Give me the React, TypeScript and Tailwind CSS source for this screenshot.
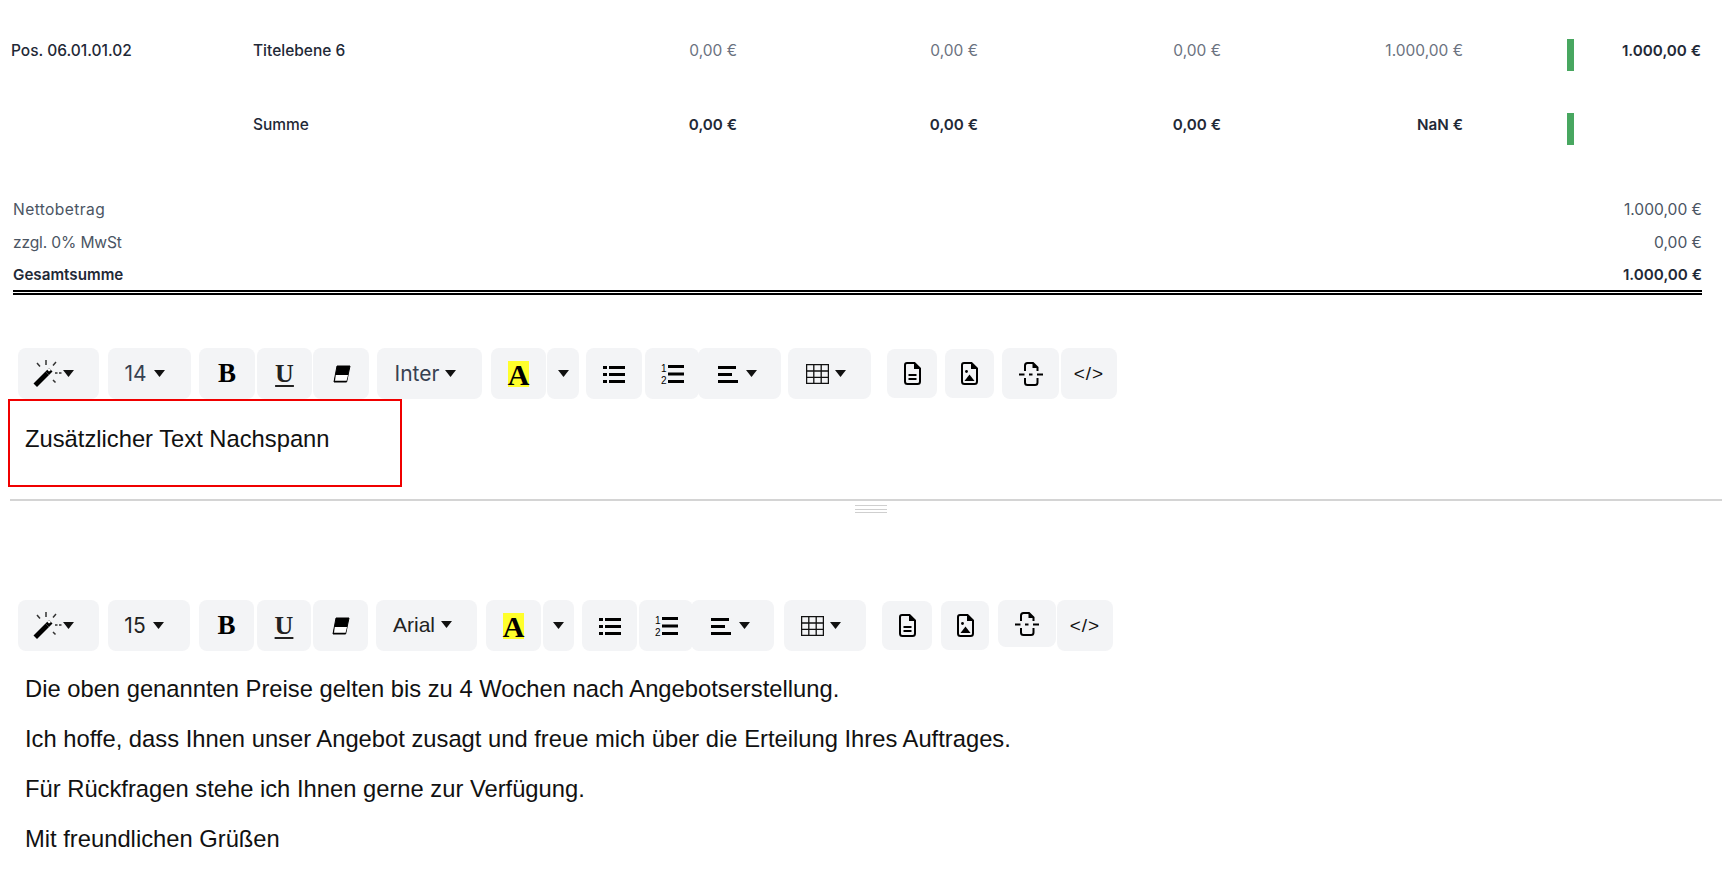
import React from 'react';

const Caret = ({ className = '' }: { className?: string }) => (
  <svg width="11" height="7" viewBox="0 0 11 7" className={className}>
    <path d="M0 0h11L5.5 7z" fill="#111" />
  </svg>
);

const WandIcon = () => (
  <svg width="30" height="29" viewBox="0 0 30 29" fill="none">
    <path d="M1.5 24.5L13.5 12.5l3.5 3.5L5 28z" fill="#000" />
    <path d="M13.5 12.5l3.5-3.5 3.5 3.5-3.5 3.5z" fill="#000" />
    <path d="M15 10.5l2-1.5 2 2-2 1.5z" fill="#fff" />
    <path d="M14 1v5M5 4l3 3.5M24 3l-3 3.5M23 14h2.5M27 14h2.5M21 21l2.5 2.5" stroke="#333" strokeWidth="1.5" />
  </svg>
);

const EraserIcon = () => (
  <svg width="19" height="18" viewBox="0 0 19 18" fill="none">
    <path d="M5 1h13l-3.4 16H2z" fill="#000" stroke="#000" strokeWidth="1" strokeLinejoin="round" />
    <path d="M3.8 10h12.2l-1.4 5.8H3z" fill="#fff" />
  </svg>
);

const ListIcon = () => (
  <svg width="22" height="18" viewBox="0 0 22 18" fill="#000">
    <rect x="0" y="1" width="4" height="3" />
    <rect x="0" y="8" width="4" height="3" />
    <rect x="0" y="15" width="4" height="3" />
    <rect x="6" y="1" width="16" height="3" />
    <rect x="6" y="8" width="16" height="3" />
    <rect x="6" y="15" width="16" height="3" />
  </svg>
);

const OrderedIcon = () => (
  <svg width="23" height="20" viewBox="0 0 23 20" fill="#000">
    <text x="0" y="8" fontSize="10" fontFamily="Liberation Sans">1</text>
    <text x="0" y="19.5" fontSize="10" fontFamily="Liberation Sans">2</text>
    <rect x="7" y="1" width="16" height="3" />
    <rect x="7" y="8.5" width="16" height="3" />
    <rect x="7" y="16" width="16" height="3" />
  </svg>
);

const AlignIcon = () => (
  <svg width="20" height="18" viewBox="0 0 20 18" fill="#000">
    <rect x="0" y="1" width="18" height="3" />
    <rect x="0" y="8" width="14" height="3" />
    <rect x="0" y="15" width="20" height="3" />
  </svg>
);

const TableIcon = () => (
  <svg width="23" height="20" viewBox="0 0 23 20" fill="none" stroke="#111" strokeWidth="1.3">
    <rect x="0.6" y="0.6" width="21.8" height="18.8" />
    <path d="M0 7h23M0 13.4h23M7.8 0v20M15.2 0v20" />
  </svg>
);

const DocIcon = ({ children }: { children: React.ReactNode }) => (
  <svg width="17" height="23" viewBox="0 0 17 23" fill="none">
    <path d="M3 1H10.5l5.5 5.5V19.5a2.5 2.5 0 0 1-2.5 2.5H3.5A2.5 2.5 0 0 1 1 19.5V3a2 2 0 0 1 2-2z" stroke="#000" strokeWidth="2" />
    <path d="M10 1l6 6h-6z" fill="#000" />
    {children}
  </svg>
);

const SplitIcon = () => (
  <svg width="24" height="24" viewBox="0 0 24 24" fill="none">
    <path d="M6 9V3.5A2.5 2.5 0 0 1 8.5 1H14l4.5 4.5V9" stroke="#000" strokeWidth="2" />
    <path d="M13.5 1l5 5h-5z" fill="#000" />
    <path d="M6 16v4.5A2.5 2.5 0 0 0 8.5 23h7.5a2.5 2.5 0 0 0 2.5-2.5V16" stroke="#000" strokeWidth="2" />
    <path d="M0 12.5h5.5M10 12.5h3.5M18 12.5h6" stroke="#000" strokeWidth="1.8" />
  </svg>
);

const Btn = ({ className, children }: { className: string; children: React.ReactNode }) => (
  <div className={`flex items-center justify-center rounded-[8px] bg-[#f3f4f6] ${className}`}>{children}</div>
);

const BoldBtn = ({ className }: { className: string }) => (
  <Btn className={className}>
    <span className="font-['Liberation_Serif'] text-[27px] font-bold text-black">B</span>
  </Btn>
);

const UnderBtn = ({ className }: { className: string }) => (
  <Btn className={className}>
    <span className="font-['Liberation_Serif'] text-[26px] leading-[26px] font-bold text-[#222] underline underline-offset-[3px]">U</span>
  </Btn>
);

const ColorA = () => (
  <span className="h-[26px] bg-[#ffff2b] font-['Liberation_Serif'] text-[30px] leading-[28px] font-bold text-black">A</span>
);

const CodeText = () => <span className="pt-[2px] font-['Liberation_Sans'] text-[19px] font-medium tracking-[1px] text-[#111]">&lt;/&gt;</span>;

const ImgDoc = () => (
  <DocIcon>
    <circle cx="5.5" cy="9.5" r="1.4" fill="#000" />
    <path d="M3.5 19l5-6.5 5 6.5z" fill="#000" />
  </DocIcon>
);

const TextDoc = () => (
  <DocIcon>
    <path d="M4.5 13h8M4.5 17h8" stroke="#000" strokeWidth="1.8" />
  </DocIcon>
);

const Toolbar1 = () => (
  <div className="ml-[18px] flex h-[51px] items-center">
    <Btn className="h-[51px] w-[81px] gap-[1px] pr-[11px]"><WandIcon /><Caret /></Btn>
    <Btn className="ml-[9px] h-[51px] w-[83px] gap-[7px] pr-[10px] text-[21px] text-[#374151]">14<Caret /></Btn>
    <BoldBtn className="ml-[8px] h-[51px] w-[56px]" />
    <UnderBtn className="ml-[2px] h-[51px] w-[55px]" />
    <Btn className="ml-[1px] h-[51px] w-[56px]"><EraserIcon /></Btn>
    <Btn className="ml-[8px] h-[51px] w-[105px] gap-[6px] pr-[8px] text-[21px] text-[#374151]">Inter<Caret /></Btn>
    <Btn className="ml-[9px] h-[51px] w-[55px]"><ColorA /></Btn>
    <Btn className="ml-[1px] h-[51px] w-[32px]"><Caret /></Btn>
    <Btn className="ml-[7px] h-[51px] w-[56px]"><ListIcon /></Btn>
    <Btn className="ml-[3px] h-[51px] w-[54px]"><OrderedIcon /></Btn>
    <Btn className="-ml-[1px] h-[51px] w-[83px] gap-[8px] pr-[5px]"><AlignIcon /><Caret /></Btn>
    <Btn className="ml-[7px] h-[51px] w-[83px] gap-[6px] pr-[8px]"><TableIcon /><Caret /></Btn>
    <Btn className="ml-[16px] h-[49px] w-[50px]"><TextDoc /></Btn>
    <Btn className="ml-[8px] h-[49px] w-[49px]"><ImgDoc /></Btn>
    <Btn className="ml-[8px] h-[51px] w-[57px]"><SplitIcon /></Btn>
    <Btn className="ml-[2px] h-[51px] w-[56px]"><CodeText /></Btn>
  </div>
);

const Toolbar2 = () => (
  <div className="ml-[18px] flex h-[51px] items-center">
    <Btn className="h-[51px] w-[81px] gap-[1px] pr-[11px]"><WandIcon /><Caret /></Btn>
    <Btn className="ml-[9px] h-[51px] w-[82px] gap-[7px] pr-[10px] text-[21px] text-[#222]">15<Caret /></Btn>
    <BoldBtn className="ml-[9px] h-[51px] w-[55px]" />
    <UnderBtn className="ml-[3px] h-[51px] w-[54px]" />
    <Btn className="ml-[2px] h-[51px] w-[55px]"><EraserIcon /></Btn>
    <Btn className="ml-[8px] h-[51px] w-[101px] gap-[6px] pr-[8px] pb-[2px] font-['Liberation_Sans'] text-[21px] text-[#222]">Arial<Caret /></Btn>
    <Btn className="ml-[9px] h-[51px] w-[55px]"><ColorA /></Btn>
    <Btn className="ml-[2px] h-[51px] w-[31px]"><Caret /></Btn>
    <Btn className="ml-[8px] h-[51px] w-[55px]"><ListIcon /></Btn>
    <Btn className="ml-[2px] h-[51px] w-[54px]"><OrderedIcon /></Btn>
    <Btn className="-ml-[2px] h-[51px] w-[83px] gap-[8px] pr-[5px]"><AlignIcon /><Caret /></Btn>
    <Btn className="ml-[10px] h-[51px] w-[82px] gap-[6px] pr-[8px]"><TableIcon /><Caret /></Btn>
    <Btn className="ml-[16px] h-[49px] w-[50px]"><TextDoc /></Btn>
    <Btn className="ml-[9px] h-[49px] w-[48px]"><ImgDoc /></Btn>
    <Btn className="ml-[9px] mb-[4px] h-[47px] w-[58px]"><SplitIcon /></Btn>
    <Btn className="ml-[1px] h-[51px] w-[56px]"><CodeText /></Btn>
  </div>
);

const Amount = ({ children, className = '' }: { children: React.ReactNode; className?: string }) => (
  <div className={`text-right ${className}`}>{children}</div>
);

const Row = ({ pos, title, values, total, bold }: { pos: string; title: string; values: string[]; total: string; bold?: boolean }) => (
  <div className="grid h-[32px] grid-cols-[242px_242px_242px_241px_243px_242px_111px_127px] items-center">
    <div className="font-medium text-[#1f2937]">{pos}</div>
    <div className="font-medium text-[#1f2937]">{title}</div>
    {values.map((v, i) => (
      <Amount key={i} className={bold ? 'text-[15.2px] font-semibold text-[#1f2937]' : 'text-[#6b7280]'}>{v}</Amount>
    ))}
    <div className="flex justify-end"><div className="mb-[-8px] h-[32px] w-[7px] bg-[#48a760]" /></div>
    <Amount className="text-[15.2px] font-semibold text-[#1f2937]">{total}</Amount>
  </div>
);

export default function App() {
  return (
    <div className="h-[890px] w-[1722px] overflow-hidden bg-white font-['Inter',sans-serif] text-[15.5px]">
      <div className="pl-[11px] pr-[21px] pt-[35px]">
        <Row pos="Pos. 06.01.01.02" title="Titelebene 6" values={['0,00 €', '0,00 €', '0,00 €', '1.000,00 €']} total="1.000,00 €" />
        <div className="h-[42px]" />
        <Row pos="" title="Summe" values={['0,00 €', '0,00 €', '0,00 €', 'NaN €']} total="" bold />
      </div>

      <div className="ml-[13px] mr-[20px] mt-[52px] text-[15.6px] text-[#4b5563]">
        <div className="flex h-[33px] items-center justify-between"><span className="tracking-[0.4px]">Nettobetrag</span><span>1.000,00 €</span></div>
        <div className="flex h-[33px] items-center justify-between"><span className="tracking-[-0.15px]">zzgl. 0% MwSt</span><span>0,00 €</span></div>
        <div className="flex h-[36px] items-center justify-between border-b-[5px] border-double border-black pt-[2px] text-[15.2px] font-semibold text-[#1f2937]"><span>Gesamtsumme</span><span>1.000,00 €</span></div>
      </div>

      <div className="mt-[53px]"><Toolbar1 /></div>

      <div className="ml-[8px] flex h-[88px] w-[394px] items-start border-2 border-[#f00000] pl-[15px] pt-[20px] font-['Liberation_Sans'] text-[23.75px] leading-[36px] text-[#111]">
        Zusätzlicher Text Nachspann
      </div>

      <div className="ml-[10px] mt-[12px] border-t-[2px] border-[#d4d4d4]" />
      <div className="ml-[855px] mt-[4px] flex h-[8px] w-[32px] flex-col justify-between">
        <div className="h-[1px] bg-[#cfcfcf]" />
        <div className="h-[1px] bg-[#cfcfcf]" />
        <div className="h-[1px] bg-[#cfcfcf]" />
      </div>

      <div className="mt-[87px]"><Toolbar2 /></div>

      <div className="ml-[25px] mt-[20px] font-['Liberation_Sans'] text-[23.75px] leading-[36px] text-[#111]">
        <p className="mb-[14px]">Die oben genannten Preise gelten bis zu 4 Wochen nach Angebotserstellung.</p>
        <p className="mb-[14px]">Ich hoffe, dass Ihnen unser Angebot zusagt und freue mich über die Erteilung Ihres Auftrages.</p>
        <p className="mb-[14px]">Für Rückfragen stehe ich Ihnen gerne zur Verfügung.</p>
        <p>Mit freundlichen Grüßen</p>
      </div>
    </div>
  );
}
